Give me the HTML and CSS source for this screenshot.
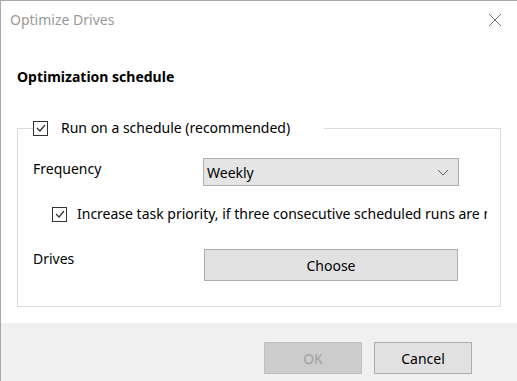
FILE: index.html
```html
<!DOCTYPE html>
<html lang="en">
<head>
    <meta charset="UTF-8">
    <title>Optimize Drives</title>
    <link rel="stylesheet" href="styles.css">
</head>
<body>
    <div class="window">
        <!-- Title bar -->
        <div class="titlebar">
            <span class="title">Optimize Drives</span>
            <svg class="close" width="14" height="14" viewBox="0 0 14 14">
                <path d="M1 1 L13 13 M13 1 L1 13" stroke="#707070" stroke-width="1" fill="none"/>
            </svg>
        </div>

        <div class="main">
            <h2>Optimization schedule</h2>

            <fieldset class="group">
                <legend class="check-row">
                    <span class="checkbox">
                        <svg width="12" height="12" viewBox="0 0 12 12"><path d="M2 6 L5 9 L10 3" stroke="#333" stroke-width="1.2" fill="none"/></svg>
                    </span>
                    <span>Run on a schedule (recommended)</span>
                </legend>

                <div class="row row-freq">
                    <label class="label">Frequency</label>
                    <div class="dropdown">
                        <span>Weekly</span>
                        <svg width="12" height="7" viewBox="0 0 12 7"><path d="M1 1 L6 6 L11 1" stroke="#606060" stroke-width="1" fill="none"/></svg>
                    </div>
                </div>

                <div class="check-row priority">
                    <span class="checkbox">
                        <svg width="12" height="12" viewBox="0 0 12 12"><path d="M2 6 L5 9 L10 3" stroke="#333" stroke-width="1.2" fill="none"/></svg>
                    </span>
                    <span class="clip">Increase task priority, if three consecutive scheduled runs are missed</span>
                </div>

                <div class="row row-drives">
                    <label class="label">Drives</label>
                    <button class="btn choose">Choose</button>
                </div>
            </fieldset>
        </div>

        <!-- Bottom buttons -->
        <div class="footer">
            <button class="btn disabled">OK</button>
            <button class="btn">Cancel</button>
        </div>
    </div>
</body>
</html>
```

FILE: styles.css
```css
/* Basic page */
body {
    margin: 0;
    padding: 0;
    font-family: "Noto Sans", "Open Sans", sans-serif;
    font-size: 14px;
    color: #000;
    background: #fff;
}

.window {
    width: 517px;
    height: 381px;
    box-sizing: border-box;
    border-left: 1px solid #a8a8a8;
    border-top: 1px solid #a8a8a8;
    display: flex;
    flex-direction: column;
    overflow: hidden;
}

/* Title bar */
.titlebar {
    height: 36px;
    display: flex;
    align-items: center;
    justify-content: space-between;
    padding: 0 15px 0 9px;
}

.titlebar .title {
    color: #999;
    font-size: 14px;
    margin-top: 1px;
}

.titlebar .close {
    margin-top: 1px;
}

/* Main area */
.main {
    flex: 1;
    padding: 0 16px;
}

.main h2 {
    margin: 30px 0 0;
    font-size: 14px;
    font-weight: bold;
    line-height: 20px;
}

.group {
    margin: 31px 0 0;
    padding: 0 15px 25px;
    border: 1px solid #dcdcdc;
    min-width: 0;
}

.check-row {
    display: flex;
    align-items: center;
    height: 20px;
    line-height: 20px;
}

legend.check-row {
    padding: 0 34px 0 0;
}

.checkbox {
    width: 13px;
    height: 13px;
    border: 1px solid #333;
    display: flex;
    align-items: center;
    justify-content: center;
    margin-right: 13px;
    flex-shrink: 0;
}

.row {
    display: flex;
    align-items: flex-start;
}

.row .label {
    width: 170px;
    flex-shrink: 0;
    line-height: 20px;
    padding-top: 1px;
}

.row-freq {
    margin-top: 20px;
}

.dropdown {
    width: 256px;
    height: 28px;
    box-sizing: border-box;
    background: #e5e5e5;
    border: 1px solid #adadad;
    display: flex;
    align-items: center;
    justify-content: space-between;
    padding: 0 9px 0 3px;
}

/* the reference control cuts its own label at the right edge */
.priority {
    margin-top: 18px;
    margin-left: 19px;
    overflow: hidden;
    white-space: nowrap;
    width: 435px;
}

.priority .checkbox {
    margin-right: 10px;
}

.row-drives {
    margin-top: 25px;
}

.row-drives .label {
    padding-top: 0;
}

/* Buttons */
.btn {
    font-family: inherit;
    font-size: 14px;
    color: #000;
    background: #e1e1e1;
    border: 1px solid #adadad;
    width: 98px;
    height: 32px;
    padding: 0;
}

.btn.choose {
    width: 254px;
    margin-left: 1px;
}

.btn.disabled {
    background: #cccccc;
    border-color: #bfbfbf;
    color: #a0a0a0;
}

.footer {
    height: 58px;
    background: #f0f0f0;
    display: flex;
    justify-content: flex-end;
    align-items: flex-start;
    gap: 12px;
    padding: 19px 45px 0 0;
    box-sizing: border-box;
}
```
